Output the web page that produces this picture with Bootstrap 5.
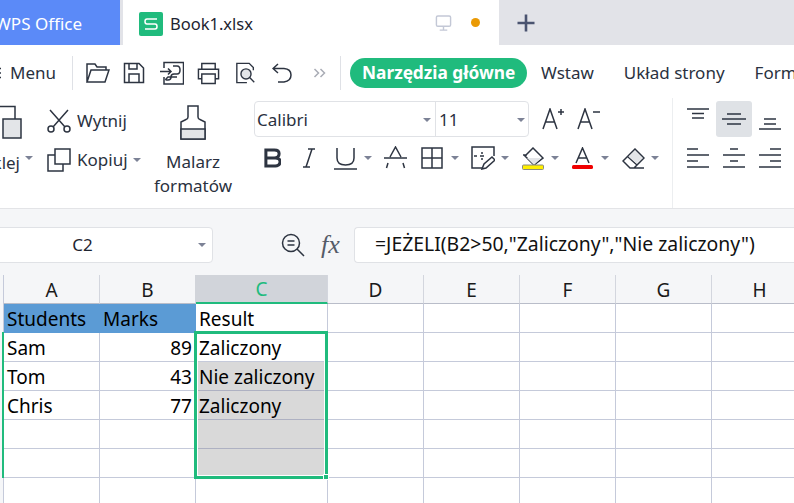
<!DOCTYPE html>
<html lang="pl">
<head>
  <meta charset="UTF-8">
  <title>Book1.xlsx</title>
  <link href="https://cdn.jsdelivr.net/npm/bootstrap@5.3.3/dist/css/bootstrap.min.css" rel="stylesheet">
  <style>
    html,body{height:503px;overflow:hidden}
    body{margin:0;width:794px;font-family:"Noto Sans","Open Sans",sans-serif;color:#2a3140;background:#fff;font-size:17px}
    svg{display:block;flex:none;fill:none;stroke:#2d3441;stroke-width:1.5}
    .arrow{width:0;height:0;border-left:4px solid transparent;border-right:4px solid transparent;border-top:4px solid #7c8296;flex:none}
    /* spacing helpers, px values from the picture */
    .sp6{margin-left:6px}.sp7{margin-left:7px}.sp8{margin-left:8px}.sp12{margin-left:12px}.sp13{margin-left:13px}
    .sp14{margin-left:14px}.sp15{margin-left:15px}.sp19{margin-left:19px}.sp21{margin-left:21px}.sp22{margin-left:22px}

    /* tab bar */
    .tabbar{height:45px;background:#e2e3e8}
    .tab-home{width:120px;background:#5b8af8;color:#fff;white-space:nowrap;overflow:hidden;justify-content:flex-end;padding:3px 38px 0 0}
    .tab-book{width:376px;margin-left:3px;background:#fff;padding-left:16px}
    .sheet-logo{width:24px;height:24px;background:#20bb7d;border-radius:2px;margin-top:3px}
    .sheet-logo svg{stroke:#fff}
    .tab-name{margin:3px 0 0 7px;font-size:16.500px;color:#1e2430}
    .tab-state{gap:19px;padding-right:19px}
    .i-monitor{stroke:#c3c8d6}
    .dot{width:9px;height:9px;border-radius:50%;background:#ea9a05}
    .tab-plus{padding-left:17px}
    .i-plus{stroke:#4b5470;stroke-width:2.600}

    /* quick access + menu tabs */
    .toolbar{height:53px;white-space:nowrap;overflow:hidden;padding-top:3px}
    .menu-lbl{width:73px;flex:none;border-right:1px solid #dfe1e6;height:34px;padding-right:16px}
    .qa-group{width:268px;flex:none;border-right:1px solid #dfe1e6;height:34px;padding-left:13px}
    .i-more{stroke:#a9acb5}
    .pill{background:#20bb7d;color:#fff;font-weight:700;font-size:17.300px;height:30px;border-radius:15px;padding:0 12px;margin-left:9px;width:177px}
    .menu-tab{margin-left:14px;margin-right:16px}

    /* ribbon */
    .ribbon{height:111px;border-bottom:1px solid #e3e4e7;box-shadow:0 2px 2px #eceef0;white-space:nowrap;overflow:hidden}
    .paste-col{width:46px;flex:none;padding-top:7px}
    .paste-lbl{margin-top:12px;gap:5px;height:24px}
    .paste-arrow{margin-bottom:10px}
    .paste-txt{width:20px;overflow:hidden;display:flex;justify-content:flex-end}
    .clip-col{width:102px;flex:none;padding:9px 0 0 1px;gap:11px}
    .clip-row{gap:6px;height:28px}
    .clip-arrow{margin-left:-1px}
    .fmt-col{width:90px;flex:none;padding-top:7px;line-height:24px}
    .fmt-txt{margin-top:9px;text-align:center}
    .font-col{width:435px;flex:none;border-right:1px solid #eceef0;padding:3px 0 0 16px}
    .font-box{width:275px;height:36px;border:1px solid #e0e2e6;border-radius:4px;flex:none}
    .font-name{width:181px;border-right:1px solid #e0e2e6;height:100%;padding:2px 4px 0 2px}
    .font-size{flex:1;height:100%;padding:2px 3px 0 3px}
    .font-row2{margin-top:8px;padding-left:10px;height:26px}
    .align-col{padding:3px 0 0 7px;display:grid;grid-template-columns:repeat(3,36px);grid-auto-rows:36px;row-gap:3px}
    .align-cell{display:flex;align-items:center;justify-content:center}
    .align-on{background:#dfe2e6;border-radius:3px}

    /* formula bar */
    .formula{height:66px;background:#f5f6f8;padding-top:18px}
    .name-box{width:247px;height:36px;margin-left:-34px;background:#fff;border:1px solid #e0e2e6;border-radius:4px;flex:none;padding-right:6px;color:#1e2430}
    .i-find{margin:6px 0 0 68px}
    .fx-lbl{font-family:"Liberation Serif",serif;font-style:italic;font-size:26px;line-height:36px;margin-left:16px;width:35px;color:#555b68}
    .formula-input{width:440px;height:36px;background:#fff;border:1px solid #e0e2e6;border-right:0;border-radius:4px 0 0 4px;flex:none;padding:0 0 2px 20px;font-size:19.400px;color:#111;white-space:nowrap}

    /* sheet */
    .sheet-wrap{position:relative;height:228px;overflow:hidden}
    table.cells{table-layout:fixed;border-collapse:separate;border-spacing:0;width:808px;font-family:"Noto Sans","Open Sans",sans-serif;font-size:19px;color:#000}
    table.cells td,table.cells th{border-right:1px solid #c5cada;border-bottom:1px solid #c5cada;height:29px;padding:1px 3px 0;font-weight:400;white-space:nowrap;overflow:hidden;line-height:26px}
    table.cells th{text-align:center;color:#1a1a1a;background:#f5f6f8;border-bottom-color:#b9bdc9;border-right-color:#d3d6de}
    table.cells .c-rowhead{padding:0;background:#f5f6f8;border-right-color:#c5cada;border-bottom:0}
    table.cells th.c-before{border-right-color:#d1d4da}
    table.cells th.c-active{background:#d1d4da;color:#20bb7d;border-bottom:2px solid #20bb7d}
    table.cells td.c-blue{background:#5b9bd5;border-right-color:#5b9bd5;border-bottom-color:#5b9bd5}
    table.cells td.c-sel{background:#d9d9d9;border-bottom-color:#aeb1c2}
    .w-strip{width:4px}.w-std{width:96px}.w-wide{width:132px}
    .sel-box{position:absolute;left:194px;top:56px;width:134px;height:148px;border:3px solid #20bb7d;box-shadow:inset 0 0 0 1px #fff;pointer-events:none}
    .sel-handle{position:absolute;right:-4px;bottom:-4px;width:6px;height:6px;background:#20bb7d;border:1px solid #fff}
    .row-mark{position:absolute;left:2px;top:57px;width:2px;height:146px;background:#20bb7d}
  </style>
</head>
<body>
  <!-- tabs -->
  <div class="tabbar d-flex">
    <div class="tab-home d-flex align-items-center">WPS Office</div>
    <div class="tab-book d-flex align-items-center">
      <div class="sheet-logo d-flex align-items-center justify-content-center">
        <svg width="14" height="14" viewBox="0 0 14 14"><path d="M13 2H3Q1 2 1 4.500T3 7H11Q13 7 13 9.500T11 12H1"/></svg>
      </div>
      <span class="tab-name">Book1.xlsx</span>
      <div class="ms-auto d-flex align-items-center tab-state">
        <svg class="i-monitor" width="17" height="18" viewBox="0 0 18 18"><rect x="1.500" y="1.500" width="15" height="11" rx="1.500"/><path d="M9 13v3M5 16.500h8"/></svg>
        <div class="dot"></div>
      </div>
    </div>
    <div class="tab-plus d-flex align-items-center">
      <svg class="i-plus" width="20" height="20" viewBox="0 0 20 20"><path d="M10 1.500v17M1.500 10h17"/></svg>
    </div>
  </div>

  <!-- quick access -->
  <div class="toolbar d-flex align-items-center">
    <div class="menu-lbl d-flex align-items-center justify-content-end">
      <svg width="4" height="12" viewBox="0 0 4 12" class="me-2"><path d="M-2 1.500H3M-2 6H3M-2 10.500H3"/></svg>Menu
    </div>
    <div class="qa-group d-flex align-items-center">
      <svg width="24" height="22" viewBox="0 0 24 22"><path d="M1 20V2H9l2 3H20V8M1 20H19L23 8H5L1 20Z"/></svg>
      <svg class="sp13" width="22" height="22" viewBox="0 0 22 22"><path d="M1.500 1.500H16L20.500 6V20.500H1.500ZM6 20.500V12H16V20.500M6 1.500V7H14V1.500"/></svg>
      <svg class="sp15" width="24" height="24" viewBox="0 0 24 24"><path d="M4 7V1.500H23.500V23H4V16M0 10.500H11M8 7.500l3 3-3 3M13 5h4q3 0 3 4t-3 4h-3q-3 0-3 3t-3 3-2-1 2-2h9"/></svg>
      <svg class="sp13" width="23" height="24" viewBox="0 0 24 24"><path d="M5 8V2H19V8M5 18H1.500V8H22.500V18H19M5 13H19V23H5Z"/></svg>
      <svg class="sp15" width="22" height="24" viewBox="0 0 24 24"><path d="M20 9V6L15.500 1.500H2V22.500H13"/><circle cx="12" cy="13" r="5.500" fill="#e3e5e8"/><path d="M16 17 21 22"/></svg>
      <svg class="sp15" width="20" height="20" viewBox="0 0 20 20"><path d="M6 1 1 5.500 6 10M1 5.500H12Q19 6 19 12T12 19H6"/></svg>
      <svg class="sp21 i-more" width="13" height="10" viewBox="0 0 12 10"><path d="M1 1 5 5 1 9M7 1 11 5 7 9"/></svg>
    </div>
    <div class="pill d-flex align-items-center">Narzędzia główne</div>
    <span class="menu-tab">Wstaw</span>
    <span class="menu-tab">Układ strony</span>
    <span class="menu-tab">Formuły</span>
  </div>

  <!-- ribbon -->
  <div class="ribbon d-flex">
    <div class="paste-col d-flex flex-column">
      <svg width="22" height="34" viewBox="0 0 22 34"><path d="M0 1.500H15V14"/><rect x="3" y="14" width="18" height="19" fill="#e3e5e8"/></svg>
      <div class="paste-lbl d-flex align-items-center"><span class="paste-txt">Wklej</span><span class="arrow paste-arrow"></span></div>
    </div>
    <div class="clip-col d-flex flex-column">
      <div class="clip-row d-flex align-items-center">
        <svg width="24" height="24" viewBox="0 0 24 24"><circle cx="4" cy="20" r="3"/><circle cx="20" cy="20" r="3"/><path d="M6 18 21 1M18 18 3 1"/></svg>Wytnij
      </div>
      <div class="clip-row d-flex align-items-center">
        <svg width="24" height="24" viewBox="0 0 24 24"><rect x="8" y="1" width="15" height="15"/><path d="M8 7H1V23H16V16"/></svg>Kopiuj<span class="arrow clip-arrow"></span>
      </div>
    </div>
    <div class="fmt-col d-flex flex-column align-items-center">
      <svg width="28" height="36" viewBox="0 0 28 36"><path d="M9 1H19V12Q19 14 21 14.500L26 17V34H2V17L7 14.500Q9 14 9 12Z"/><path d="M2 24H26V34H2Z" fill="#e3e5e8"/></svg>
      <div class="fmt-txt">Malarz<br>formatów</div>
    </div>
    <div class="font-col">
      <div class="d-flex align-items-center">
        <div class="font-box d-flex">
          <div class="font-name d-flex align-items-center justify-content-between">Calibri<span class="arrow"></span></div>
          <div class="font-size d-flex align-items-center justify-content-between">11<span class="arrow"></span></div>
        </div>
        <svg class="sp13" width="22" height="22" viewBox="0 0 22 22"><path d="M1 21 8 1 15 21M3.500 14H12.500M16 4H22M19 1V7"/></svg>
        <svg class="sp13" width="23" height="22" viewBox="0 0 23 22"><path d="M1 21 8 1 15 21M3.500 14H12.500M16 4H23"/></svg>
      </div>
      <div class="font-row2 d-flex align-items-center">
        <svg width="17" height="20" viewBox="0 0 18 20"><path stroke-width="3.200" d="M2 1.500H11Q16 1.500 16 5.500T11 10H2V1.500ZM2 10H12Q17 10 17 14T12 18.500H2Z"/></svg>
        <svg class="sp22" width="12" height="20" viewBox="0 0 12 20"><path d="M3 19 9 1M5 1H12M0 19H7"/></svg>
        <svg class="sp19" width="23" height="23" viewBox="0 0 23 23"><path d="M3 1V11Q3 18 11.500 18T20 11V1M0 22H23"/></svg>
        <span class="arrow sp7"></span>
        <svg class="sp12" width="23" height="24" viewBox="0 0 23 24"><path d="M6 11 11.500 1 17 11M0 12H23M4 17 2.500 22M19 17 20.500 22"/></svg>
        <svg class="sp14" width="22" height="22" viewBox="0 0 22 22"><rect x="1" y="1" width="20" height="20"/><path d="M11 1V21M1 11H21"/></svg>
        <span class="arrow sp8"></span>
        <svg class="sp12" width="24" height="24" viewBox="0 0 24 24"><path d="M11 22H1V1H23V10M3 10H6M9 10H13M11 6V8M11 12V14"/><path d="M11 23 13 18 21 11 24 14 15 22Z"/></svg>
        <span class="arrow sp6"></span>
        <svg class="sp13" width="22" height="23" viewBox="0 0 22 23"><path d="M1 8H5M11 1 21 11 12 18 3 9Z"/><path d="M5 11H19L12 18Z" fill="#e3e5e8" stroke="none"/><rect x="0.500" y="18" width="21" height="4.500" rx="1" fill="#ffef00" stroke="#8a8a80" stroke-width="1"/></svg>
        <span class="arrow sp7"></span>
        <svg class="sp13" width="21" height="23" viewBox="0 0 21 23"><path d="M4 16 10.500 1 17 16M6 11H15"/><rect y="18" width="21" height="4" rx="1.500" fill="#f00000" stroke="none"/></svg>
        <span class="arrow sp8"></span>
        <svg class="sp13" width="23" height="21" viewBox="0 0 23 21"><path d="M13 1 22 10 12 20 8 20 1 13ZM5.500 8.500 15 17M8 20H22"/><path d="M13 2.500 20.500 10 14.500 15.500 6.500 8.500Z" fill="#e3e5e8" stroke="none"/></svg>
        <span class="arrow sp6"></span>
      </div>
    </div>
    <div class="align-col">
      <div class="align-cell"><svg width="24" height="24" viewBox="0 0 24 24"><path d="M1 2H23M6 6.500H18M6 11H18"/></svg></div>
      <div class="align-cell align-on"><svg width="24" height="24" viewBox="0 0 24 24"><path d="M5 7H19M0 12H24M5 17H19"/></svg></div>
      <div class="align-cell"><svg width="24" height="24" viewBox="0 0 24 24"><path d="M6 12H18M6 17H18M1 22H23"/></svg></div>
      <div class="align-cell"><svg width="24" height="24" viewBox="0 0 24 24"><path d="M1 3H12M1 9H23M1 15H12M1 21H23"/></svg></div>
      <div class="align-cell"><svg width="24" height="24" viewBox="0 0 24 24"><path d="M8 3H16M1 9H23M8 15H16M1 21H23"/></svg></div>
      <div class="align-cell"><svg width="24" height="24" viewBox="0 0 24 24"><path d="M12 3H23M1 9H23M12 15H23M1 21H23"/></svg></div>
    </div>
  </div>

  <!-- formula bar -->
  <div class="formula d-flex align-items-start">
    <div class="name-box d-flex align-items-center">
      <span class="flex-grow-1 text-center">C2</span><span class="arrow"></span>
    </div>
    <svg class="i-find" width="24" height="24" viewBox="0 0 24 24"><circle cx="10" cy="10" r="8.500"/><path d="M6.500 8H13.500M6.500 12H13.500M16 16 23 23"/></svg>
    <span class="fx-lbl">fx</span>
    <div class="formula-input d-flex align-items-center">=JEŻELI(B2&gt;50,"Zaliczony","Nie zaliczony")</div>
  </div>

  <!-- sheet -->
  <div class="sheet-wrap">
    <table class="cells">
      <colgroup><col class="w-strip"><col class="w-std"><col class="w-std"><col class="w-wide"><col class="w-std"><col class="w-std"><col class="w-std"><col class="w-std"><col class="w-std"></colgroup>
      <tr><th class="c-rowhead"></th><th>A</th><th class="c-before">B</th><th class="c-active">C</th><th>D</th><th>E</th><th>F</th><th>G</th><th>H</th></tr>
      <tr><td class="c-rowhead"></td><td class="c-blue">Students</td><td class="c-blue">Marks</td><td>Result</td><td></td><td></td><td></td><td></td><td></td></tr>
      <tr><td class="c-rowhead"></td><td>Sam</td><td class="text-end">89</td><td>Zaliczony</td><td></td><td></td><td></td><td></td><td></td></tr>
      <tr><td class="c-rowhead"></td><td>Tom</td><td class="text-end">43</td><td class="c-sel">Nie zaliczony</td><td></td><td></td><td></td><td></td><td></td></tr>
      <tr><td class="c-rowhead"></td><td>Chris</td><td class="text-end">77</td><td class="c-sel">Zaliczony</td><td></td><td></td><td></td><td></td><td></td></tr>
      <tr><td class="c-rowhead"></td><td></td><td></td><td class="c-sel"></td><td></td><td></td><td></td><td></td><td></td></tr>
      <tr><td class="c-rowhead"></td><td></td><td></td><td class="c-sel"></td><td></td><td></td><td></td><td></td><td></td></tr>
      <tr><td class="c-rowhead"></td><td></td><td></td><td></td><td></td><td></td><td></td><td></td><td></td></tr>
    </table>
    <div class="row-mark"></div>
    <div class="sel-box"><div class="sel-handle"></div></div>
  </div>
  <script src="https://cdn.jsdelivr.net/npm/bootstrap@5.3.3/dist/js/bootstrap.bundle.min.js"></script>
</body>
</html>
